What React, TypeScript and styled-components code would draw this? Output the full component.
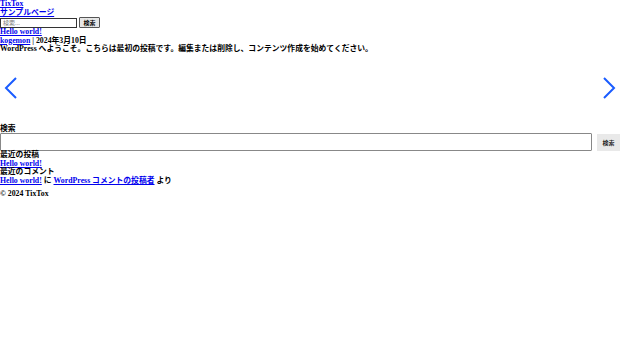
import React from "react";
import styled, { createGlobalStyle } from "styled-components";

const Global = createGlobalStyle`
  html, body { margin: 0; padding: 0; background: #fff; }
  body {
    font-family: "Liberation Serif", "Noto Sans CJK JP", serif;
    font-size: 7.8px;
    font-weight: 700;
    line-height: 8.5px;
    color: #000;
  }
  a { color: #0000ee; }
`;

const Page = styled.div`
  display: flex;
  flex-direction: column;
`;

const Header = styled.header`
  display: flex;
  flex-direction: column;
`;

const Link = styled.a`
  color: #0000ee;
  text-decoration: underline;
`;

const Line = styled.div``;

const SmallForm = styled.form`
  display: flex;
  align-items: center;
  gap: 2px;
  height: 11px;
  margin: 0;
`;

const SmallInput = styled.input`
  box-sizing: border-box;
  width: 77px;
  height: 10px;
  border: 1px solid #333;
  padding: 0 2px;
  font-size: 6px;
  font-family: "Noto Sans CJK JP", sans-serif;
  color: #000;
  &::placeholder { color: #777; }
`;

const SmallButton = styled.button`
  box-sizing: border-box;
  height: 11px;
  width: 21px;
  padding: 0;
  font-size: 6px;
  font-weight: 700;
  font-family: "Noto Sans CJK JP", sans-serif;
  border: 1px solid #555;
  background: #e6e6e6;
  border-radius: 1px;
`;

const Carousel = styled.div`
  position: relative;
  height: 70px;
  margin-top: 1px;
`;

const Control = styled.button<{ $side: "left" | "right" }>`
  position: absolute;
  top: 0;
  bottom: 0;
  ${(p) => (p.$side === "left" ? "left: 0;" : "right: 0;")}
  width: 22px;
  border: 0;
  background: transparent;
  padding: 0 0 3px;
  display: flex;
  align-items: center;
  justify-content: center;
`;

const Widgets = styled.aside`
  display: flex;
  flex-direction: column;
`;

const WideForm = styled.form`
  display: flex;
  align-items: center;
  gap: 5px;
  margin: 0;
  height: 18px;
`;

const WideInput = styled.input`
  box-sizing: border-box;
  flex: 1;
  height: 18px;
  border: 1px solid #888;
  border-radius: 1px;
`;

const WideButton = styled.button`
  box-sizing: border-box;
  width: 23px;
  height: 17px;
  padding: 0;
  font-size: 6px;
  font-family: "Noto Sans CJK JP", sans-serif;
  font-weight: 700;
  border: 0;
  background: #e9e9e9;
  color: #222;
`;

const Footer = styled.footer`
  margin-top: 5px;
`;

const Chevron = ({ dir }: { dir: "left" | "right" }) => (
  <svg width="14" height="22" viewBox="0 0 14 22" fill="none">
    <path
      d={dir === "left" ? "M12 1 L2 11 L12 21" : "M2 1 L12 11 L2 21"}
      stroke="#1a5cff"
      strokeWidth="2"
    />
  </svg>
);

export default function App() {
  return (
    <>
      <Global />
      <Page>
        <Header>
          <Link href="#">TixTox</Link>
          <Link href="#">サンプルページ</Link>
          <SmallForm>
            <SmallInput placeholder="検索..." />
            <SmallButton type="button">検索</SmallButton>
          </SmallForm>
        </Header>
        <main>
          <Link href="#">Hello world!</Link>
          <Line>
            <Link href="#">kogemon</Link> | 2024年3月10日
          </Line>
          <Line>
            WordPress へようこそ。こちらは最初の投稿です。編集または削除し、コンテンツ作成を始めてください。
          </Line>
          <Carousel>
            <Control $side="left" type="button"><Chevron dir="left" /></Control>
            <Control $side="right" type="button"><Chevron dir="right" /></Control>
          </Carousel>
        </main>
        <Widgets>
          <Line>検索</Line>
          <WideForm>
            <WideInput />
            <WideButton type="button">検索</WideButton>
          </WideForm>
          <Line>最近の投稿</Line>
          <div><Link href="#">Hello world!</Link></div>
          <Line>最近のコメント</Line>
          <Line>
            <Link href="#">Hello world!</Link> に <Link href="#">WordPress コメントの投稿者</Link> より
          </Line>
        </Widgets>
        <Footer>© 2024 TixTox</Footer>
      </Page>
    </>
  );
}
